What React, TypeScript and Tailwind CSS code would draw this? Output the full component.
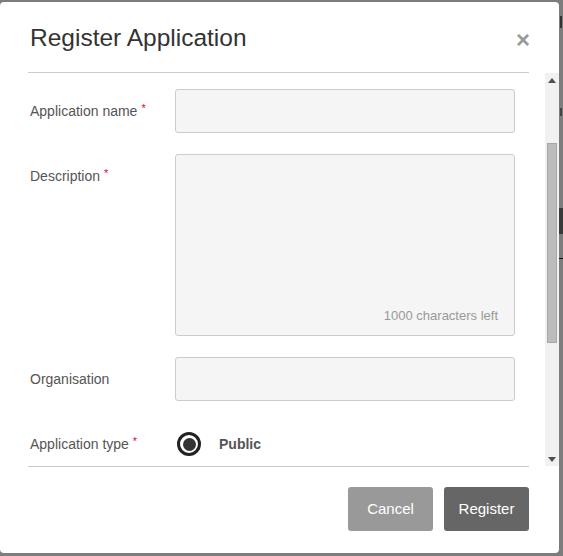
import React from "react";

const font = { fontFamily: '"Liberation Sans", Arial, sans-serif' };

function Label({ text, required }: { text: string; required?: boolean }) {
  return (
    <div className="flex h-[44px] w-[147px] shrink-0 items-center pl-[2px] text-[14px] text-[#555]">
      {text}
      {required && <span className="ml-[4px] -mt-[6px] text-[11px] text-[#e4002b]">*</span>}
    </div>
  );
}

function Scrollbar() {
  return (
    <div className="flex w-[14px] shrink-0 flex-col items-center bg-[#f1f1f1]">
      <div className="flex h-[14px] w-full items-center justify-center">
        <svg width="8" height="5" viewBox="0 0 8 5">
          <path d="M0 5 L4 0 L8 5 Z" fill="#505050" />
        </svg>
      </div>
      <div className="h-[56px]" />
      <div className="h-[200px] w-[10px] border border-[#a8a8a8] bg-[#bcbcbc]" />
      <div className="flex-1" />
      <div className="flex h-[14px] w-full items-center justify-center">
        <svg width="8" height="5" viewBox="0 0 8 5">
          <path d="M0 0 L8 0 L4 5 Z" fill="#505050" />
        </svg>
      </div>
    </div>
  );
}

export default function App() {
  return (
    <div className="flex h-[556px] w-[563px] overflow-hidden bg-[#7d7d7d] pt-[2px]" style={font}>
      <div className="flex h-[551px] w-[559px] shrink-0 flex-col rounded-[4px] bg-white">
        {/* header */}
        <div className="ml-[28px] mr-[30px] flex h-[71px] shrink-0 items-center justify-between border-b border-[#ccc] pl-[2px] pt-[3px]">
          <h2 className="text-[24.5px] text-[#333]">Register Application</h2>
          <span className="mr-[-1px] mt-[2px] text-[24px] font-bold leading-none text-[#999]">×</span>
        </div>

        {/* body */}
        <div className="flex h-[393px] shrink-0 overflow-hidden">
          <div className="flex flex-1 flex-col gap-[21px] pl-[28px] pt-[16px]">
            <div className="flex">
              <Label text="Application name" required />
              <div className="h-[44px] w-[340px] rounded-[3px] border border-[#ccc] bg-[#f5f5f5]" />
            </div>
            <div className="flex">
              <Label text="Description" required />
              <div className="flex h-[182px] w-[340px] flex-col justify-end rounded-[3px] border border-[#ccc] bg-[#f5f5f5] pb-[10px] pr-[16px] text-right text-[13px] text-[#999]">
                1000 characters left
              </div>
            </div>
            <div className="flex">
              <Label text="Organisation" />
              <div className="h-[44px] w-[340px] rounded-[3px] border border-[#ccc] bg-[#f5f5f5]" />
            </div>
            <div className="flex">
              <Label text="Application type" required />
              <div className="flex h-[44px] items-center">
                <div className="ml-[2px] flex h-[24px] w-[24px] items-center justify-center rounded-full border-[3px] border-[#222]">
                  <div className="h-[13px] w-[13px] rounded-full bg-[#333]" />
                </div>
                <span className="ml-[18px] text-[14px] font-bold text-[#555]">Public</span>
              </div>
            </div>
          </div>
          <Scrollbar />
        </div>

        {/* footer */}
        <div className="ml-[28px] mr-[30px] flex justify-end gap-[11px] border-t border-[#ccc] pt-[20px]">
          <button className="h-[44px] w-[85px] rounded-[3px] bg-[#999] text-[15px] text-white">Cancel</button>
          <button className="h-[44px] w-[85px] rounded-[3px] bg-[#666] text-[15px] text-white">Register</button>
        </div>
      </div>

      {/* sliver of the page behind the overlay */}
      <div className="flex w-[4px] flex-col">
        <div className="h-[14px]" />
        <div className="ml-[1px] h-[12px] w-[2px] bg-[#333]" />
        <div className="h-[80px]" />
        <div className="ml-[1px] h-[8px] w-[2px] bg-[#444]" />
        <div className="h-[92px]" />
        <div className="h-[26px] w-full bg-[#3a3a3a]" />
        <div className="h-[24px]" />
        <div className="h-[1px] w-full bg-[#111]" />
      </div>
    </div>
  );
}
